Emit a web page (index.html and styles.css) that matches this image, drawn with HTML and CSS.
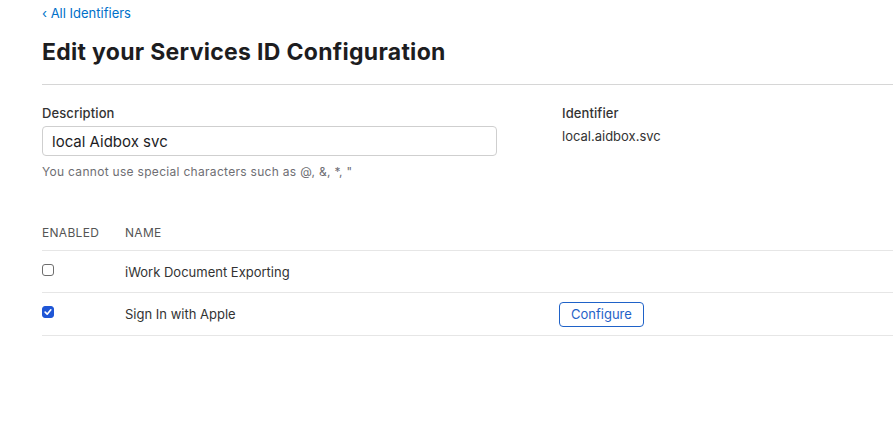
FILE: index.html
```html
<!DOCTYPE html>
<html>
<head>
<meta charset="utf-8">
<link rel="stylesheet" href="styles.css">
</head>
<body>
<div class="page">
  <a class="back" href="#">&#8249; All Identifiers</a>
  <h1 class="title">Edit your Services ID Configuration</h1>
  <div class="rule"></div>
  <div class="fields">
    <div class="desc">
      <div class="label">Description</div>
      <input class="input" type="text" value="local Aidbox svc">
      <div class="hint">You cannot use special characters such as @, &amp;, *, "</div>
    </div>
    <div class="ident">
      <div class="label">Identifier</div>
      <div class="value">local.aidbox.svc</div>
    </div>
  </div>
  <div class="table">
    <div class="row head">
      <div class="c1">ENABLED</div>
      <div class="c2">NAME</div>
    </div>
    <div class="row">
      <div class="c1"><span class="cb"></span></div>
      <div class="c2">iWork Document Exporting</div>
    </div>
    <div class="row">
      <div class="c1"><span class="cb on"><svg width="12" height="12" viewBox="0 0 12 12"><path d="M2.6 6.2 L5 8.6 L9.4 3.4" fill="none" stroke="#fff" stroke-width="2" stroke-linecap="round" stroke-linejoin="round"/></svg></span></div>
      <div class="c2">Sign In with Apple</div>
      <div class="c3"><button class="btn">Configure</button></div>
    </div>
  </div>
</div>
</body>
</html>
```
FILE: styles.css
```css
* { box-sizing: border-box; }
html, body { margin: 0; padding: 0; background: #fff; }
body { font-family: Inter, "Liberation Sans", sans-serif; color: #333; }
.page { padding-left: 42px; padding-top: 5px; }
.back { display: block; color: #0070c9; text-decoration: none; font-size: 13px; line-height: 16px; }
.title { margin: 17px 0 0 0; font-size: 23px; line-height: 28px; font-weight: 700; color: #1d1d1f; letter-spacing: 0.3px; }
.rule { height: 1px; background: #d6d6d6; margin-top: 18px; }
.fields { display: flex; margin-top: 20px; }
.desc { width: 455px; }
.ident { margin-left: 65px; }
.label { font-size: 13px; line-height: 16px; color: #333; font-weight: 500; letter-spacing: 0.1px; }
.input { display: block; width: 455px; height: 30px; margin-top: 5px; border: 1px solid #cfcfcf; border-radius: 4px; padding: 0 9px; font-family: inherit; font-size: 15px; color: #1d1d1f; }
.hint { margin-top: 8px; font-size: 12px; line-height: 15px; color: #6e6e73; letter-spacing: 0.3px; }
.value { margin-top: 7px; font-size: 13px; line-height: 16px; color: #333; }
.table { margin-top: 37px; }
.row { display: flex; align-items: center; height: 42px; border-bottom: 1px solid #e6e6e6; font-size: 13px; color: #333; }
.row:last-child { height: 43px; }
.row.head { height: 35px; font-size: 12px; color: #555; letter-spacing: 0.3px; }
.c1 { width: 83px; display: flex; align-items: center; }
.c2 { width: 434px; }
.row .c1 { position: relative; top: -2px; }
.row.head .c1, .row.head .c2 { top: -1px; position: relative; }
.cb { display: inline-block; width: 12px; height: 12px; border: 1px solid #6e6e6e; border-radius: 3px; background: #fff; }
.cb.on { background: #1f56d6; border-color: #1f56d6; display: flex; align-items: center; justify-content: center; }
.cb.on svg { display: block; }
.btn { height: 25px; padding: 0 11px; border: 1px solid #1f62c8; border-radius: 4px; background: #fff; color: #1f62c8; font-family: inherit; font-size: 13px; }
```
